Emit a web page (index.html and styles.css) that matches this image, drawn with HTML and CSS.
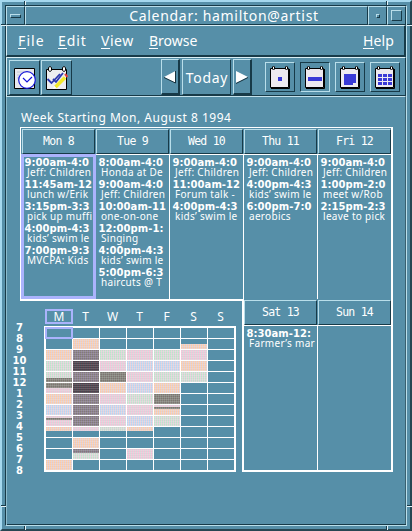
FILE: index.html
```html
<!DOCTYPE html>
<html lang="en">
<head>
<meta charset="utf-8">
<title>Calendar: hamilton@artist</title>
<link rel="stylesheet" href="styles.css">
</head>
<body>
<div class="window">
  <i class="notch h top-left"></i><i class="notch h top-right"></i>
  <i class="notch h bottom-left"></i><i class="notch h bottom-right"></i>
  <i class="notch v left-top"></i><i class="notch v right-top"></i>
  <i class="notch v left-bottom"></i><i class="notch v right-bottom"></i>
  <div class="inner">
    <header class="titlebar">
      <span class="tb-btn"><i class="dash"></i></span>
      <h1 class="tb-title"><span class="title-text">Calendar: hamilton@artist</span></h1>
      <span class="tb-btn"><i class="dot"></i></span>
      <span class="tb-btn last"><i class="square"></i></span>
    </header>
    <nav class="menubar">
      <span class="menu file"><u>F</u>ile</span>
      <span class="menu edit"><u>E</u>dit</span>
      <span class="menu view"><u>V</u>iew</span>
      <span class="menu browse"><u>B</u>rowse</span>
      <span class="menu help"><u>H</u>elp</span>
    </nav>
    <div class="toolbar">
      <span class="tool">
        <svg width="24" height="24" viewBox="0 0 24 24"><path d="M1.500 2.500h20v20h-20z" fill="#e9e9ee" stroke="#000"/><path d="M4 6h10M4 9h5M4 12h3" stroke="#c3c8d8"/><circle cx="14" cy="14" r="8.3" fill="#fff" stroke="#1616d8" stroke-width="1.2"/><path d="M10 12l4 4 5-5" fill="none" stroke="#1616d8" stroke-width="1.2"/></svg>
      </span>
      <span class="tool second">
        <svg width="24" height="26" viewBox="0 0 24 26"><path d="M1.500 4.500h20v20h-20z" fill="#eeeef0" stroke="#000"/><path d="M3.500 2.500q1.500-2 3 0v3q-1.500 2-3 0zM17.500 2.500q1.500-2 3 0v3q-1.500 2-3 0z" fill="#fff" stroke="#000"/><path d="M2.500 14l4 4L15 9M8 14l3 3 7-9" fill="none" stroke="#2b36ad" stroke-width="1.800"/><path d="M10.500 22l9.500-9.500" stroke="#f3e92b" stroke-width="3.500"/><path d="M8 24l3-1-2-2z" fill="#fff"/><path d="M20 9l2.500 3" stroke="#e04040" stroke-width="2"/></svg>
      </span>
      <div class="pager">
        <span class="arrow"><svg width="14" height="14" viewBox="0 0 14 14"><path d="M12.500 1v12L1 7z" fill="#fff"/><path d="M1 7.500l11.500 5.500V1" fill="none" stroke="#18333e"/></svg></span>
        <span class="today">Today</span>
        <span class="arrow next"><svg width="14" height="14" viewBox="0 0 14 14"><path d="M1 1v12l12-6z" fill="#fff"/><path d="M1 13.500l12-6" stroke="#18333e"/></svg></span>
      </div>
      <div class="views">
        <span class="view-btn"><svg width="20" height="24" viewBox="0 0 20 24"><use href="#page"/><path d="M8 12h4v4H8z" fill="#3a3ad6"/></svg></span>
        <span class="view-btn on"><svg width="20" height="24" viewBox="0 0 20 24"><use href="#page"/><path d="M3 12h14v4H3z" fill="#3a3ad6"/></svg></span>
        <span class="view-btn"><svg width="20" height="24" viewBox="0 0 20 24"><use href="#page"/><path d="M4 9h12v9h-3v2H4z" fill="#3a3ad6"/></svg></span>
        <span class="view-btn"><svg width="20" height="24" viewBox="0 0 20 24"><use href="#page"/><path d="M3 9h4v3H3zM8 9h4v3H8zM13 9h4v3h-4zM3 13h4v3H3zM8 13h4v3H8zM13 13h4v3h-4zM3 17h4v3H3zM8 17h4v3H8zM13 17h4v3h-4z" fill="#3a3ad6"/></svg></span>
      </div>
      <svg class="defs" width="0" height="0"><defs><g id="page"><path d="M.5 3.500h18v19H.5z" fill="#eeeaf0" stroke="#000"/><path d="M1 23.500h18.500V4" fill="none" stroke="#000"/><path d="M2.500 2q1-2 2 0v2q-1 2-2 0zM15.500 2q1-2 2 0v2q-1 2-2 0z" fill="#fff" stroke="#000"/></g></defs></svg>
    </div>

    <main class="content">
      <h2 class="range"><span class="range-text">Week Starting Mon, August 8 1994</span></h2>
      <section class="week">
        <article class="day today-col"><h3>Mon 8</h3><div class="list"><b>9:00am-4:0</b><span>Jeff: Children</span><b>11:45am-12</b><span>lunch w/Erik</span><b>3:15pm-3:3</b><span>pick up muffi</span><b>4:00pm-4:3</b><span>kids’ swim le</span><b>7:00pm-9:3</b><span>MVCPA: Kids</span></div></article>
        <article class="day"><h3>Tue 9</h3><div class="list"><b>8:00am-4:0</b><span>Honda at De</span><b>9:00am-4:0</b><span>Jeff: Children</span><b>10:00am-11</b><span>one-on-one</span><b>12:00pm-1:</b><span>Singing</span><b>4:00pm-4:3</b><span>kids’ swim le</span><b>5:00pm-6:3</b><span>haircuts @ T</span></div></article>
        <article class="day"><h3>Wed 10</h3><div class="list"><b>9:00am-4:0</b><span>Jeff: Children</span><b>11:00am-12</b><span>Forum talk -</span><b>4:00pm-4:3</b><span>kids’ swim le</span></div></article>
        <article class="day"><h3>Thu 11</h3><div class="list"><b>9:00am-4:0</b><span>Jeff: Children</span><b>4:00pm-4:3</b><span>kids’ swim le</span><b>6:00pm-7:0</b><span>aerobics</span></div></article>
        <article class="day"><h3>Fri 12</h3><div class="list"><b>9:00am-4:0</b><span>Jeff: Children</span><b>1:00pm-2:0</b><span>meet w/Rob</span><b>2:15pm-2:3</b><span>leave to pick</span></div></article>
      </section>
      <div class="lower">
        <section class="overview">
          <div class="hours"><b>7</b><b>8</b><b>9</b><b>10</b><b>11</b><b>12</b><b>1</b><b>2</b><b>3</b><b>4</b><b>5</b><b>6</b><b>7</b><b>8</b></div>
          <div class="chart">
            <div class="letters"><span class="sel">M</span><span>T</span><span>W</span><span>T</span><span>F</span><span>S</span><span>S</span></div>
            <div class="slots">
              <i class="sel"></i><i></i><i></i><i></i><i></i><i></i><i></i>
              <i></i><i class="p"></i><i></i><i></i><i></i><i><s class="gap5"></s><s class="p"></s></i><i></i>
              <i class="p"></i><i class="g"></i><i class="m"></i><i class="r"></i><i class="m"></i><i class="r"></i><i></i>
              <i class="m"></i><i class="d"></i><i class="r"></i><i class="b"></i><i class="b"></i><i class="p"></i><i></i>
              <i><s class="m"></s><s class="n h4"></s></i><i class="g"></i><i class="n"></i><i class="r"></i><i class="m"></i><i class="m"></i><i></i>
              <i><s class="n h5"></s><s class="r"></s></i><i class="d"></i><i class="p"></i><i class="b"></i><i class="p"></i><i></i><i></i>
              <i class="p"></i><i class="g"></i><i class="r"></i><i class="m"></i><i class="n"></i><i></i><i></i>
              <i class="b"></i><i class="g"></i><i class="b"></i><i class="r"></i><i><s class="r h2"></s><s class="n h2"></s><s class="p"></s></i><i></i><i></i>
              <i><s class="r h2"></s><s class="n h2"></s><s class="r"></s></i><i class="g"></i><i class="r"></i><i class="b"></i><i class="m"></i><i></i><i></i>
              <i><s class="p h4"></s></i><i><s class="r h4"></s></i><i><s class="m h4"></s></i><i><s class="p h4"></s></i><i></i><i></i><i></i>
              <i></i><i class="p"></i><i></i><i></i><i></i><i></i><i></i>
              <i></i><i><s class="g h4"></s><s class="m"></s></i><i></i><i class="r"></i><i></i><i></i><i></i>
              <i class="p"></i><i></i><i></i><i></i><i></i><i></i><i></i>
            </div>
          </div>
        </section>
        <section class="weekend">
          <article class="day"><h3>Sat 13</h3><div class="list"><b>8:30am-12:</b><span>Farmer’s mar</span></div></article>
          <article class="day"><h3>Sun 14</h3><div class="list"></div></article>
        </section>
      </div>
    </main>
  </div>
</div>
</body>
</html>
```
FILE: styles.css
```css
:root {
  --base: #568fa8;
  --light: #b9deea;
  --dark: #173a48;
  --select: #abb3fc;
}
* { box-sizing: border-box; }
body { margin: 0; background: var(--base); color: #fff; font-family: "Noto Sans", "DejaVu Sans", sans-serif; }
h1, h2, h3 { margin: 0; font-weight: 400; }
i, s { font-style: normal; text-decoration: none; display: block; }

.window {
  position: relative;
  width: 412px; height: 531px;
  padding: 3px;
  background: var(--base);
  border: 2px solid;
  border-color: #a5d8ee #264652 #264652 #a5d8ee;
}
.inner {
  width: 402px; height: 521px;
  border: 1px solid;
  border-color: var(--dark) var(--light) var(--light) var(--dark);
  box-shadow: inset 1px 0 0 #8dbccd, inset 0 -1px 0 var(--dark), inset -1px 0 0 #39606f;
}
.notch { position: absolute; background: #e4f3f8; }
.notch.h { width: 1px; height: 4px; box-shadow: -1px 0 0 var(--dark); }
.notch.v { width: 5px; height: 1px; box-shadow: 0 -1px 0 var(--dark); }
.top-left { left: 23px; top: -1px; }
.top-right { left: 385px; top: -1px; }
.bottom-left { left: 23px; bottom: -1px; }
.bottom-right { left: 385px; bottom: -1px; }
.left-top { left: -1px; top: 23px; }
.right-top { right: -2px; top: 23px; }
.left-bottom { left: -1px; top: 504px; }
.right-bottom { right: -2px; top: 504px; }

.titlebar { display: flex; height: 19px; }
.tb-btn, .tb-title {
  display: flex; align-items: center; justify-content: center;
  border: 1px solid;
  border-color: var(--light) var(--dark) var(--dark) var(--light);
}
.tb-btn { width: 19px; }
.tb-title { flex: 1; padding-left: 55px; font-size: 14px; line-height: 17px; white-space: pre; }
.title-text { letter-spacing: .7px; }
.dash { width: 11px; height: 4px; border: 1px solid; border-color: var(--light) var(--dark) var(--dark) var(--light); }
.dot { width: 4px; height: 4px; border: 1px solid; border-color: var(--light) var(--dark) var(--dark) var(--light); }
.square { width: 11px; height: 11px; border: 1px solid; border-color: var(--light) var(--dark) var(--dark) var(--light); }

.menubar {
  display: flex; align-items: flex-start;
  height: 32px; padding: 5px 10px 0 11px;
  border: 1px solid;
  border-width: 1px 2px 2px 1px;
  border-color: #d9eef4 var(--dark) var(--dark) #d9eef4;
  font-size: 14px; line-height: 20px;
}
.menu u { text-decoration: none; border-bottom: 1px solid #fff; display: inline-block; height: 18px; }
.file { width: 40px; letter-spacing: 1.1px; }
.edit { width: 43px; letter-spacing: .9px; }
.view { width: 48px; letter-spacing: .5px; }
.browse { letter-spacing: 0; }
.help { margin-left: auto; letter-spacing: .1px; }

.toolbar {
  display: flex; align-items: flex-start;
  height: 40px; padding: 2px 3px 0 1px;
  border: 1px solid;
  border-color: #d9eef4 var(--dark) #c4e2ec #d9eef4;
  box-shadow: inset 0 -1px 0 var(--dark);
}
.tool, .arrow, .today, .view-btn {
  display: flex; align-items: center; justify-content: center;
  border: 1px solid;
  border-color: var(--light) var(--dark) var(--dark) var(--light);
}
.tool { width: 31px; height: 35px; margin-left: 1px; }
.pager { display: flex; gap: 2px; margin-left: 89px; height: 36px; margin-top: -1px; }
.arrow { width: 19px; border-right-width: 2px; border-bottom-width: 2px; }
.today { width: 49px; padding-left: 1px; font-size: 14px; letter-spacing: .7px; }
.views { display: flex; gap: 5px; margin: 2px 0 0 13px; }
.view-btn { width: 30px; height: 30px; }
.view-btn.on { border-color: var(--dark) var(--light) var(--light) var(--dark); }
.defs { position: absolute; }

.content { padding: 12px 11px 0 14px; }
.range { height: 18px; padding-left: 1px; font-size: 12px; line-height: 18px; white-space: nowrap; }
.range-text { letter-spacing: .5px; }
.week {
  display: grid; grid-template-columns: repeat(5, 74px);
  width: 373px; height: 172px;
  border: solid #fff; border-width: 1px 2px 0 1px;
}
.day { display: flex; flex-direction: column; min-width: 0; }
.day h3 {
  height: 25px; margin: 1px 0 0 1px;
  border: 1px solid;
  border-color: var(--light) var(--dark) var(--dark) var(--light);
  font: 11.500px/23px "DejaVu Sans Mono", monospace;
  letter-spacing: -.75px; text-align: center; white-space: pre;
}
.list {
  flex: 1; display: flex; flex-direction: column;
  padding: 2px 0 0 2.500px;
  border-top: 1px solid #fff;
  border-left: 1px solid #fff;
  overflow: hidden; white-space: nowrap;
}
.list b, .hours b { font: bold 10px/11px "DejaVu Sans", sans-serif; }
.list b { letter-spacing: .05px; }
.list span { margin: -1px 0 1px; padding-left: 2.500px; font-size: 10px; line-height: 11px; letter-spacing: .3px; }
.today-col .list { border: 3px solid var(--select); margin-right: -1px; padding: 0 0 0 .5px; z-index: 1; }

.lower { display: flex; height: 173px; }
.overview { display: flex; width: 222px; border-top: 2px solid #fff; }
.hours { display: flex; flex-direction: column; width: 15px; margin: 21px 17px 0 -8px; text-align: center; }
.chart { padding-top: 8px; }
.letters { display: grid; grid-template-columns: repeat(7, 27px); padding-left: 1px; height: 17px; }
.letters span { height: 15px; font-size: 12px; line-height: 15px; text-align: center; }
.letters .sel { border: 2px solid var(--select); line-height: 11px; width: 28px; }
.slots {
  display: grid; grid-template-columns: repeat(7, 26px); grid-auto-rows: 10px; gap: 1px;
  width: 192px; border: 2px solid #fff; background: #fff;
}
.slots i { display: flex; flex-direction: column; background-color: var(--base); }
.slots i.sel { margin: -1px; border: 2px solid var(--select); }
.slots s { flex: 1; }
.slots .h2 { flex: 0 0 2px; }
.slots .h4 { flex: 0 0 4px; }
.slots .h5 { flex: 0 0 5px; }
.slots .gap5 { flex: 0 0 5px; }
/* woven two-tone fill: coloured columns under a faint row stripe */
.slots .p, .slots .m, .slots .b, .slots .r, .slots .g, .slots .n, .slots .d {
  background:
    repeating-linear-gradient(0deg, rgba(255, 255, 255, .14) 0 1px, transparent 1px 2px),
    repeating-linear-gradient(90deg, var(--c1) 0 1px, var(--c2) 1px 2px);
}
.slots .p { --c1: #fbcba8; --c2: #dfd0d6; }
.slots .m { --c1: #bfe3cb; --c2: #e6d0dc; }
.slots .b { --c1: #b9d5f1; --c2: #e6d0da; }
.slots .r { --c1: #f3c2d8; --c2: #d5d6d8; }
.slots .g { --c1: #8d8098; --c2: #827b78; }
.slots .n { --c1: #868b80; --c2: #7e7471; }
.slots .d { --c1: #58404b; --c2: #434850; }

.weekend {
  display: grid; grid-template-columns: 73px 74px;
  width: 151px; height: 173px;
  border: solid #fff; border-width: 0 2px 2px 2px;
}
.weekend .day:first-child h3 { margin-left: 0; }
.weekend .day:first-child .list, .week .day:first-child .list { border-left-width: 0; }
.week .today-col:first-child .list { border-left-width: 3px; }
```
